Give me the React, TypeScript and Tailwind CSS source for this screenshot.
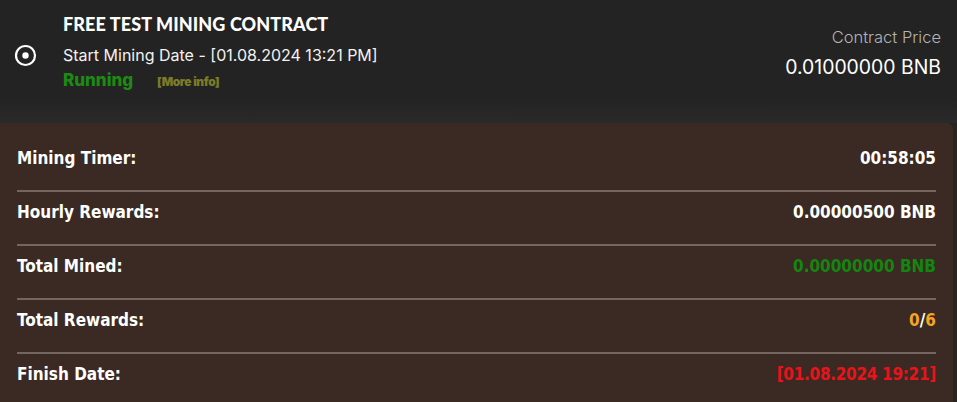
import React from "react";

const rows: { label: string; value: React.ReactNode }[] = [
  { label: "Mining Timer:", value: <span className="text-white">00:58:05</span> },
  { label: "Hourly Rewards:", value: <span className="text-white">0.00000500 BNB</span> },
  { label: "Total Mined:", value: <span className="text-[#14860f]">0.00000000 BNB</span> },
  {
    label: "Total Rewards:",
    value: (
      <span>
        <span className="text-[#f5a524]">0</span>
        <span className="text-white">/</span>
        <span className="text-[#f5a524]">6</span>
      </span>
    ),
  },
  { label: "Finish Date:", value: <span className="text-[#e8141a] tracking-[-0.3px]">[01.08.2024 19:21]</span> },
];

export default function App() {
  return (
    <div className="w-[957px] h-[402px] overflow-hidden bg-[#262524]">
      <div className="h-[123px] bg-gradient-to-b from-[#232323] from-80% to-[#2a2a2a] flex items-start">
        <div className="w-[50px] pt-[44px] pl-[14px]">
          <svg width="23" height="23" viewBox="0 0 23 23">
            <circle cx="11.5" cy="11.5" r="9.5" fill="none" stroke="#fff" strokeWidth="2.2" />
            <circle cx="11.5" cy="11.5" r="3.2" fill="#fff" />
          </svg>
        </div>
        <div className="flex-1 pl-[13px] pt-[12px]" style={{ fontFamily: "Inter, 'Open Sans', sans-serif" }}>
          <div
            className="text-white text-[18px] leading-[24px] font-black tracking-[0.1px]"
            style={{ fontFamily: "Lato, 'Open Sans', sans-serif" }}
          >
            FREE TEST MINING CONTRACT
          </div>
          <div className="text-[#f2f2f2] text-[16px] leading-[24px] mt-[7px]">
            Start Mining Date - [01.08.2024 13:21 PM]
          </div>
          <div className="flex items-baseline mt-[1px]">
            <span className="text-[#1d8a14] text-[17px] font-extrabold leading-[24px] w-[94px]">Running</span>
            <span className="text-[#7b7b28] text-[12px] font-black tracking-[-0.4px]">[More info]</span>
          </div>
        </div>
        <div
          className="pr-[16px] pt-[25px] flex flex-col items-end"
          style={{ fontFamily: "Inter, 'Open Sans', sans-serif" }}
        >
          <div className="text-[#b4b4b4] text-[16.5px] font-light leading-[24px]">Contract Price</div>
          <div className="text-white text-[19.4px] leading-[26px] mt-[5px]">0.01000000 BNB</div>
        </div>
      </div>
      <div
        className="w-[953px] h-[279px] bg-[#3a2a23] rounded-tr-[6px] px-[17px] pt-[15px]"
        style={{ fontFamily: "'DejaVu Sans Condensed', 'DejaVu Sans', sans-serif" }}
      >
        {rows.map((r, i) => (
          <div
            key={r.label}
            className={`flex justify-between items-center pt-[8px] pb-[20px] ${
              i < rows.length - 1 ? "border-b-2 border-[#73655f]" : ""
            }`}
          >
            <span className="text-white text-[17px] font-bold leading-[24px]">{r.label}</span>
            <span className="text-[17px] font-bold leading-[24px]">{r.value}</span>
          </div>
        ))}
      </div>
    </div>
  );
}
